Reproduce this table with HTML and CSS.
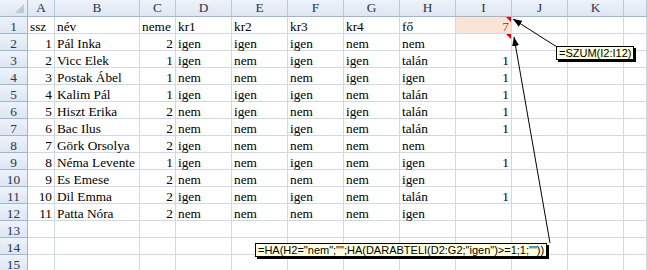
FILE: index.html
```html
<!DOCTYPE html>
<html>
<head>
<meta charset="utf-8">
<link rel="stylesheet" href="styles.css">
</head>
<body>
<div class="sheet">
  <div class="r hdr"><div class="corner"></div><div>A</div><div>B</div><div>C</div><div>D</div><div>E</div><div>F</div><div>G</div><div>H</div><div>I</div><div>J</div><div>K</div><div></div></div>
  <div class="r"><div class="h">1</div><div>ssz</div><div>név</div><div>neme</div><div>kr1</div><div>kr2</div><div>kr3</div><div>kr4</div><div>fő</div><div class="n sum cm">7</div><div></div><div></div><div></div></div>
  <div class="r"><div class="h">2</div><div class="n">1</div><div>Pál Inka</div><div class="n">2</div><div>igen</div><div>igen</div><div>igen</div><div>nem</div><div>nem</div><div class="n cm"></div><div></div><div></div><div></div></div>
  <div class="r"><div class="h">3</div><div class="n">2</div><div>Vicc Elek</div><div class="n">1</div><div>igen</div><div>nem</div><div>igen</div><div>igen</div><div>talán</div><div class="n">1</div><div></div><div></div><div></div></div>
  <div class="r"><div class="h">4</div><div class="n">3</div><div>Postak Ábel</div><div class="n">1</div><div>nem</div><div>nem</div><div>nem</div><div>igen</div><div>igen</div><div class="n">1</div><div></div><div></div><div></div></div>
  <div class="r"><div class="h">5</div><div class="n">4</div><div>Kalim Pál</div><div class="n">1</div><div>igen</div><div>igen</div><div>igen</div><div>nem</div><div>talán</div><div class="n">1</div><div></div><div></div><div></div></div>
  <div class="r"><div class="h">6</div><div class="n">5</div><div>Hiszt Erika</div><div class="n">2</div><div>nem</div><div>igen</div><div>nem</div><div>igen</div><div>talán</div><div class="n">1</div><div></div><div></div><div></div></div>
  <div class="r"><div class="h">7</div><div class="n">6</div><div>Bac Ilus</div><div class="n">2</div><div>nem</div><div>nem</div><div>igen</div><div>nem</div><div>talán</div><div class="n">1</div><div></div><div></div><div></div></div>
  <div class="r"><div class="h">8</div><div class="n">7</div><div>Görk Orsolya</div><div class="n">2</div><div>igen</div><div>nem</div><div>nem</div><div>nem</div><div>nem</div><div class="n"></div><div></div><div></div><div></div></div>
  <div class="r"><div class="h">9</div><div class="n">8</div><div>Néma Levente</div><div class="n">1</div><div>igen</div><div>nem</div><div>igen</div><div>nem</div><div>igen</div><div class="n">1</div><div></div><div></div><div></div></div>
  <div class="r"><div class="h">10</div><div class="n">9</div><div>Es Emese</div><div class="n">2</div><div>nem</div><div>nem</div><div>nem</div><div>nem</div><div>igen</div><div class="n"></div><div></div><div></div><div></div></div>
  <div class="r"><div class="h">11</div><div class="n">10</div><div>Dil Emma</div><div class="n">2</div><div>igen</div><div>nem</div><div>igen</div><div>nem</div><div>talán</div><div class="n">1</div><div></div><div></div><div></div></div>
  <div class="r"><div class="h">12</div><div class="n">11</div><div>Patta Nóra</div><div class="n">2</div><div>nem</div><div>nem</div><div>nem</div><div>nem</div><div>igen</div><div class="n"></div><div></div><div></div><div></div></div>
  <div class="r"><div class="h">13</div><div></div><div></div><div></div><div></div><div></div><div></div><div></div><div></div><div></div><div></div><div></div><div></div></div>
  <div class="r"><div class="h">14</div><div></div><div></div><div></div><div></div><div></div><div></div><div></div><div></div><div></div><div></div><div></div><div></div></div>
  <div class="r"><div class="h">15</div><div></div><div></div><div></div><div></div><div></div><div></div><div></div><div></div><div></div><div></div><div></div><div></div></div>

  <svg class="arrows" width="647" height="270" viewBox="0 0 647 270">
    <defs>
      <marker id="ah" markerUnits="userSpaceOnUse" markerWidth="9" markerHeight="7" refX="9" refY="3.5" orient="auto">
        <path d="M0,0 L9,3.5 L0,7 Z" fill="#000"/>
      </marker>
    </defs>
    <line x1="557" y1="47" x2="513" y2="19" stroke="#000" stroke-width="1" marker-end="url(#ah)"/>
    <line x1="550" y1="243" x2="514" y2="37" stroke="#000" stroke-width="1" marker-end="url(#ah)"/>
  </svg>

  <div class="note note1">=SZUM(I2:I12)</div>
  <div class="note note2">=HA(H2="nem";"";HA(DARABTELI(D2:G2;"igen")&gt;=1;1;""))</div>
</div>
</body>
</html>
```

FILE: styles.css
```css
html, body {
  margin: 0;
  padding: 0;
  background: #ffffff;
}

body {
  font-family: "Liberation Serif", "Times New Roman", serif;
  font-size: 13.3px;
  color: #000;
}

.sheet {
  position: relative;
  width: 647px;
  height: 270px;
  overflow: hidden;
}

.r {
  display: grid;
  grid-template-columns: 28px 27px 85px 36px repeat(8, 56px) 23px;
  height: 17px;
}

.r > div {
  box-sizing: border-box;
  position: relative;
  height: 17px;
  border-right: 1px solid #d0d7e5;
  border-bottom: 1px solid #d0d7e5;
  padding: 3px 2px 0 2px;
  line-height: 14px;
  white-space: nowrap;
}

.r > .n {
  text-align: right;
}

.r > .h,
.hdr > div {
  background: linear-gradient(#eef3fa, #dde6f2);
  border-right-color: #9eb6ce;
  border-bottom-color: #9eb6ce;
  text-align: center;
  color: #27364d;
}

.hdr > div {
  padding-top: 1px;
  border-right-color: #b7c8db;
}

.hdr > .corner {
  border-right-color: #9eb6ce;
}

.corner::after {
  content: "";
  position: absolute;
  right: 3px;
  bottom: 3px;
  width: 0;
  height: 0;
  border-left: 9px solid transparent;
  border-bottom: 9px solid #bccadb;
}

.r > .sum {
  background: #fbe4d6;
  color: #a2483c;
}

.cm::after {
  content: "";
  position: absolute;
  top: 0;
  right: 0;
  width: 0;
  height: 0;
  border-left: 5px solid transparent;
  border-top: 5px solid #e00000;
}

.arrows {
  position: absolute;
  left: 0;
  top: 0;
  pointer-events: none;
}

.note {
  position: absolute;
  background: #ffffe1;
  border: 1px solid #000;
  box-shadow: 2px 2px 0 #000;
  font-family: "Liberation Sans", Arial, sans-serif;
  font-size: 11px;
  line-height: 12px;
  padding: 0 2px;
  white-space: nowrap;
  color: #000;
}

.note1 {
  left: 556px;
  top: 46px;
}

.note2 {
  left: 255px;
  top: 243px;
}
```
